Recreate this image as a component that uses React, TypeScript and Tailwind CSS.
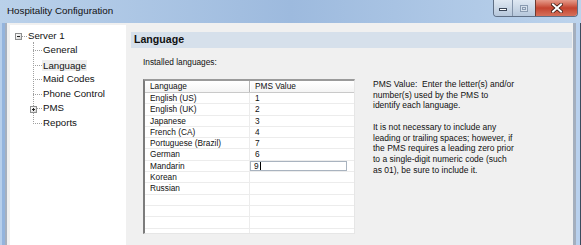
import React from 'react';

const font = { fontFamily: '"Liberation Sans", Arial, sans-serif' };

const languages = [
  { name: 'English (US)', value: '1' },
  { name: 'English (UK)', value: '2' },
  { name: 'Japanese', value: '3' },
  { name: 'French (CA)', value: '4' },
  { name: 'Portuguese (Brazil)', value: '7' },
  { name: 'German', value: '6' },
  { name: 'Mandarin', value: '9', editing: true },
  { name: 'Korean', value: '' },
  { name: 'Russian', value: '' },
  { name: '', value: '' },
  { name: '', value: '' },
  { name: '', value: '' },
  { name: '', value: '' },
];

const children = ['General', 'Language', 'Maid Codes', 'Phone Control', 'PMS', 'Reports'];

function TreeBox({ plus }: { plus?: boolean }) {
  return (
    <div className="relative w-[7px] h-[7px] border border-[#8e8f8f] bg-gradient-to-br from-white to-[#d6d6d6]">
      <div className="absolute left-[1px] top-[2px] w-[3px] h-px bg-[#1f1f1f]" />
      {plus && <div className="absolute left-[2px] top-[1px] w-px h-[3px] bg-[#1f1f1f]" />}
    </div>
  );
}

function TitleBar() {
  return (
    <div className="relative h-[23px] flex items-center bg-gradient-to-r from-[#bad1ea] via-[#9dbade] to-[#bcd3ec]">
      <span className="pl-[7px] text-[9.8px] text-[#111]">Hospitality Configuration</span>
      <div className="absolute left-[493px] top-0 flex h-[17px] border border-t-0 border-[#5f6f85] rounded-b-[4px] overflow-hidden">
        <div className="w-[19px] h-full flex items-center justify-center bg-gradient-to-b from-[#dfe8f2] to-[#b6c7db] border-r border-[#8494aa]">
          <div className="w-[8px] h-[3px] bg-white border border-[#3a4658] mt-[3px]" />
        </div>
        <div className="w-[23px] h-full flex items-center justify-center bg-gradient-to-b from-[#dfe8f2] to-[#b6c7db] border-r border-[#6d3a30]">
          <div className="w-[8px] h-[7px] border border-[#8a9bb0] bg-[#d6e0ec] flex items-center justify-center">
            <div className="w-[4px] h-[3px] border border-[#8a9bb0]" />
          </div>
        </div>
        <div className="w-[41px] h-full flex items-center justify-center bg-gradient-to-b from-[#e59c8c] via-[#c4432f] to-[#d5705a]">
          <svg width="12" height="10" viewBox="0 0 12 10">
            <path d="M2 1.5 L10 8.5 M10 1.5 L2 8.5" stroke="#3b1a12" strokeWidth="3.6" strokeLinecap="square" />
            <path d="M2 1.5 L10 8.5 M10 1.5 L2 8.5" stroke="#ffffff" strokeWidth="2" strokeLinecap="square" />
          </svg>
        </div>
      </div>
    </div>
  );
}

export default function App() {
  return (
    <div className="w-[581px] h-[245px] overflow-hidden bg-[#a9c3e3]" style={font}>
      <TitleBar />
      <div className="flex h-[222px]">
        <div className="w-[7px] flex">
          <div className="w-[2px] bg-[#b7cfeb]" />
          <div className="w-[3px] bg-[#94b4dd]" />
          <div className="w-[2px] bg-[#a6b0be]" />
        </div>
        <div className="flex-1 flex bg-[#f0f0f0] pl-[3px] pt-[2px]">
          <div className="w-[116px] bg-white pt-[4px] text-[9.7px] text-[#111]">
            <div className="relative h-[14.5px] flex items-center">
              <div className="ml-[5px]">
                <TreeBox />
              </div>
              <div className="w-[5px] border-t border-dotted border-[#a0a0a0]" />
              <span className="ml-[1px]">Server 1</span>
            </div>
            <div className="relative">
              <div className="absolute left-[23px] top-[-2px] bottom-[6.5px] border-l border-dotted border-[#a0a0a0]" />
              {children.map((c) => (
                <div key={c} className="relative h-[14.5px] flex items-center">
                  <div className="ml-[23px] w-[9px] border-t border-dotted border-[#a0a0a0]" />
                  {c === 'PMS' && (
                    <div className="absolute left-[20px] top-[4px]">
                      <TreeBox plus />
                    </div>
                  )}
                  <span className={c === 'Language' ? 'ml-0 px-[1px] bg-[#efefef] leading-[11px]' : 'ml-[1px]'}>{c}</span>
                </div>
              ))}
            </div>
          </div>
          <div className="flex-1 ml-[5px] pt-[7px]">
            <div className="h-[16px] bg-[#d6e0eb] flex items-center pl-[3px]">
              <span className="text-[10.6px] font-bold text-[#111]">Language</span>
            </div>
            <div className="pl-[12px] pt-[9px] text-[8.3px] text-[#111]">
              <div className="leading-[11px]">Installed languages:</div>
              <div className="flex mt-[11px]">
                <div className="w-[212px] h-[155px] bg-white border-l-2 border-t-2 border-l-[#7c7c7c] border-t-[#9a9a9a] border-r border-b border-r-[#e6e6e6] border-b-[#e6e6e6] overflow-hidden">
                  <div className="flex h-[12px] border-b border-[#c9c9c9] bg-gradient-to-b from-white to-[#f4f4f4]">
                    <div className="w-[105px] pl-[5px] flex items-center border-r border-[#b5b5b5]">Language</div>
                    <div className="w-px bg-white" />
                    <div className="flex-1 pl-[4px] flex items-center">PMS Value</div>
                  </div>
                  {languages.map((l, i) => (
                    <div key={i} className="flex h-[11.3px] border-b border-[#ececec]">
                      <div className="w-[105px] pl-[5px] flex items-center border-r border-[#ececec] leading-none">{l.name}</div>
                      {l.editing ? (
                        <div className="w-[97px] flex items-center border border-[#a9b3bf] pl-[3px] leading-none">
                          {l.value}
                          <span className="w-px h-[8px] bg-black ml-[1px]" />
                        </div>
                      ) : (
                        <div className="flex-1 pl-[5px] flex items-center leading-none">{l.value}</div>
                      )}
                    </div>
                  ))}
                </div>
                <div className="ml-[18px] text-[8.5px] leading-[10.7px] text-[#111]">
                  <div>PMS Value:&nbsp; Enter the letter(s) and/or</div>
                  <div>number(s) used by the PMS to</div>
                  <div>identify each language.</div>
                  <div className="h-[10.7px]" />
                  <div>It is not necessary to include any</div>
                  <div>leading or trailing spaces; however, if</div>
                  <div>the PMS requires a leading zero prior</div>
                  <div>to a single-digit numeric code (such</div>
                  <div>as 01), be sure to include it.</div>
                </div>
              </div>
            </div>
          </div>
          <div className="w-[1px]" />
        </div>
        <div className="w-[8px] flex">
          <div className="w-[3px] bg-[#a4afbe]" />
          <div className="w-[4px] bg-[#b9d1ee]" />
          <div className="w-[1px] bg-[#3d4b5e]" />
        </div>
      </div>
    </div>
  );
}
